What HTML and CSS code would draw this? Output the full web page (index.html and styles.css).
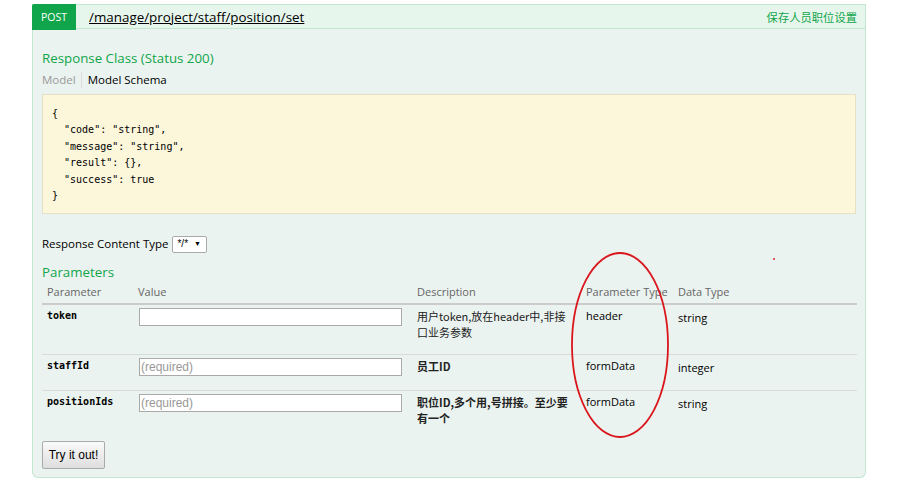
FILE: index.html
```html
<!DOCTYPE html>
<html>
<head>
<meta charset="utf-8">
<link rel="stylesheet" href="styles.css">
</head>
<body>
<div class="op">
  <div class="heading">
    <span class="badge">POST</span>
    <a class="path" href="#">/manage/project/staff/position/set</a>
    <span class="summary">保存人员职位设置</span>
  </div>
  <div class="content">
    <h4 class="h-resp">Response Class (Status 200)</h4>
    <div class="tabs"><span class="tab-off">Model</span><span class="tab-on">Model Schema</span></div>
    <pre class="schema">{
  "code": "string",
  "message": "string",
  "result": {},
  "success": true
}</pre>
    <div class="ctype">Response Content Type <span class="select">*/* <span class="arrow">▼</span></span></div>
    <h4 class="h-params">Parameters</h4>
    <table class="params">
      <thead>
        <tr><th class="c1">Parameter</th><th class="c2">Value</th><th class="c3">Description</th><th class="c4">Parameter Type</th><th class="c5">Data Type</th></tr>
      </thead>
      <tbody>
        <tr>
          <td class="pname">token</td>
          <td><span class="input"></span></td>
          <td class="desc">用户token,放在header中,非接口业务参数</td>
          <td class="ptype">header</td>
          <td class="dtype">string</td>
        </tr>
        <tr>
          <td class="pname">staffId</td>
          <td><span class="input">(required)</span></td>
          <td class="desc req">员工ID</td>
          <td class="ptype">formData</td>
          <td class="dtype">integer</td>
        </tr>
        <tr class="rlast">
          <td class="pname">positionIds</td>
          <td><span class="input">(required)</span></td>
          <td class="desc req">职位ID,多个用,号拼接。至少要有一个</td>
          <td class="ptype">formData</td>
          <td class="dtype">string</td>
        </tr>
      </tbody>
    </table>
    <div class="actions"><button class="try">Try it out!</button></div>
  </div>
</div>
<svg class="annot" width="924" height="500" viewBox="0 0 924 500">
  <ellipse cx="620" cy="345" rx="48" ry="92" fill="none" stroke="#d9161c" stroke-width="1.8"/>
  <circle cx="774" cy="259" r="0.9" fill="#d9161c"/>
</svg>
</body>
</html>
```

FILE: styles.css
```css
html, body {
  margin: 0;
  padding: 0;
  background: #fff;
}
body {
  font-family: "Open Sans", "Noto Sans", "Noto Sans CJK SC", sans-serif;
  color: #000;
  position: relative;
  width: 924px;
  height: 500px;
  overflow: hidden;
}
.op {
  margin: 4px 0 0 32px;
  width: 834px;
}
.heading {
  display: flex;
  align-items: center;
  height: 25px;
  background: #e7f6ec;
  border: 1px solid #c3e8d1;
  border-left: none;
  box-sizing: border-box;
}
.badge {
  width: 44px;
  background: #10a54a;
  color: #fff;
  font-size: 10.5px;
  font-weight: 500;
  display: flex;
  align-items: center;
  justify-content: center;
  border-radius: 2px 0 0 0;
  margin-top: -1px;
  margin-bottom: -1px;
  box-sizing: border-box;
  height: 26px;
}
.path {
  margin-left: 13px;
  font-size: 13.4px;
  color: #000;
  text-decoration: underline;
  flex: 1;
}
.summary {
  font-size: 11.3px;
  color: #10a54a;
  margin-right: 8px;
  font-family: "Noto Sans CJK SC", sans-serif;
}
.content {
  background: #ebf3f0;
  border: 1px solid #c3e8d1;
  border-top: none;
  border-radius: 0 0 6px 6px;
  padding: 19px 9px 8px 9px;
  height: 449px;
  box-sizing: border-box;
}
h4 {
  margin: 0;
  font-weight: normal;
  color: #10a54a;
  font-size: 13.3px;
}
.h-resp {
  line-height: 20px;
}
.tabs {
  margin-top: 4px;
  font-size: 11.5px;
  line-height: 16px;
  display: flex;
}
.tab-off {
  color: #999;
  padding-right: 5px;
  border-right: 1px solid #ddd;
}
.tab-on {
  color: #000;
  padding-left: 6px;
}
.schema {
  margin: 6px 0 0 0;
  background: #fcf6db;
  border: 1px solid #e5e0c6;
  height: 120px;
  box-sizing: border-box;
  padding: 11px 9px;
  font-family: "DejaVu Sans Mono", monospace;
  font-size: 10px;
  line-height: 16.4px;
  color: #000;
}
.ctype {
  margin-top: 21px;
  font-size: 11.5px;
  line-height: 18px;
  display: flex;
  align-items: center;
}
.select {
  margin-left: 4px;
  display: inline-flex;
  align-items: center;
  height: 17px;
  box-sizing: border-box;
  padding: 0 5px 0 4px;
  border: 1px solid #aaa;
  background: #fff;
  font-family: "Liberation Sans", sans-serif;
  font-size: 10px;
  border-radius: 2px;
}
.arrow {
  font-size: 7px;
  margin-left: 6px;
}
.h-params {
  margin-top: 9px;
  line-height: 20px;
}
.params {
  width: 815px;
  border-collapse: collapse;
  table-layout: fixed;
}
.params th {
  text-align: left;
  font-weight: normal;
  color: #666;
  font-size: 11px;
  padding: 2px 5px 4px 5px;
  border-bottom: 2px solid #ccc;
  line-height: 15px;
}
.c1 { width: 81px; }
.c2 { width: 269px; }
.c3 { width: 159px; }
.c4 { width: 82px; }
.params td {
  vertical-align: top;
  padding: 3px 5px 14px 5px;
  border-bottom: 1px solid #d8dcd9;
  font-size: 11px;
  line-height: 16px;
}
.params tr.rlast td { border-bottom: none; }
.params td.pname {
  font-family: "DejaVu Sans Mono", monospace;
  font-weight: bold;
  font-size: 10px;
}
.input {
  display: block;
  box-sizing: border-box;
  width: 263px;
  height: 18px;
  margin-left: 1px;
  border: 1px solid #aaa;
  background: #fff;
  font-family: "Liberation Sans", sans-serif;
  font-size: 12px;
  line-height: 16px;
  color: #999;
  padding-left: 1px;
}
.params td.desc {
  font-family: "Noto Sans CJK SC", sans-serif;
  font-size: 11px;
  color: #222;
  padding-right: 10px;
}
.params td.desc.req {
  font-weight: bold;
}
.params td.dtype {
  padding-top: 5px;
}
.actions {
  margin-top: 1px;
}
.try {
  width: 63px;
  height: 28px;
  border: 1px solid #aaa;
  border-radius: 2px;
  background: linear-gradient(#fafafa, #dedede);
  font-family: "Liberation Sans", sans-serif;
  font-size: 12px;
  color: #000;
  padding: 0;
}
.annot {
  position: absolute;
  left: 0;
  top: 0;
  pointer-events: none;
}
```
